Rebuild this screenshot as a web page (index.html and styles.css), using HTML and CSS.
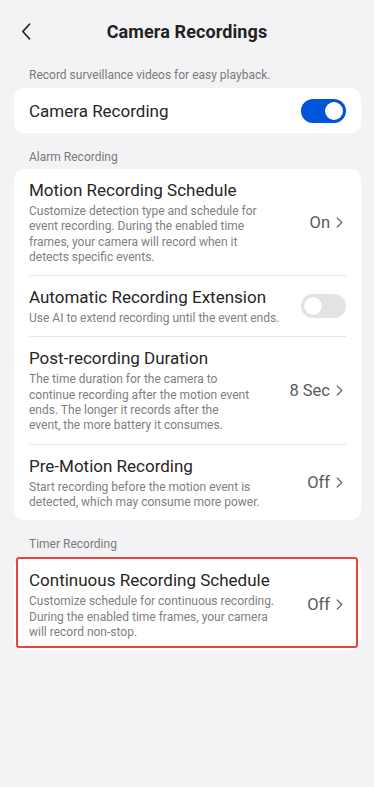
FILE: index.html
```html
<!DOCTYPE html>
<html lang="en">
<head>
<meta charset="utf-8">
<meta name="viewport" content="width=device-width, initial-scale=1">
<title>Camera Recordings</title>
<link rel="stylesheet" href="styles.css">
</head>
<body>
<header class="topbar">
  <button class="back" aria-label="Back">
    <svg width="10" height="17" viewBox="0 0 10 17"><path d="M8.5 1.2 L1.8 8.5 L8.5 15.8" fill="none" stroke="#222" stroke-width="1.7" stroke-linecap="round" stroke-linejoin="round"/></svg>
  </button>
  <h1 class="title">Camera Recordings</h1>
  <span class="spacer"></span>
</header>

<p class="section-label first">Record surveillance videos for easy playback.</p>
<section class="card">
  <div class="row single">
    <span class="row-title">Camera Recording</span>
    <span class="switch on"><span class="knob"></span></span>
  </div>
</section>

<p class="section-label">Alarm Recording</p>
<section class="card">
  <div class="row">
    <div class="text">
      <div class="row-title">Motion Recording Schedule</div>
      <div class="row-desc">Customize detection type and schedule for<br>event recording. During the enabled time<br>frames, your camera will record when it<br>detects specific events.</div>
    </div>
    <span class="value">On<svg class="chev" width="7" height="11" viewBox="0 0 7 11"><path d="M1.2 1 L5.8 5.5 L1.2 10" fill="none" stroke="#666" stroke-width="1.2" stroke-linecap="round" stroke-linejoin="round"/></svg></span>
  </div>
  <div class="row">
    <div class="text">
      <div class="row-title">Automatic Recording Extension</div>
      <div class="row-desc">Use AI to extend recording until the event ends.</div>
    </div>
    <span class="switch"><span class="knob"></span></span>
  </div>
  <div class="row">
    <div class="text">
      <div class="row-title">Post-recording Duration</div>
      <div class="row-desc">The time duration for the camera to<br>continue recording after the motion event<br>ends. The longer it records after the<br>event, the more battery it consumes.</div>
    </div>
    <span class="value">8 Sec<svg class="chev" width="7" height="11" viewBox="0 0 7 11"><path d="M1.2 1 L5.8 5.5 L1.2 10" fill="none" stroke="#666" stroke-width="1.2" stroke-linecap="round" stroke-linejoin="round"/></svg></span>
  </div>
  <div class="row">
    <div class="text">
      <div class="row-title">Pre-Motion Recording</div>
      <div class="row-desc">Start recording before the motion event is<br>detected, which may consume more power.</div>
    </div>
    <span class="value">Off<svg class="chev" width="7" height="11" viewBox="0 0 7 11"><path d="M1.2 1 L5.8 5.5 L1.2 10" fill="none" stroke="#666" stroke-width="1.2" stroke-linecap="round" stroke-linejoin="round"/></svg></span>
  </div>
</section>

<p class="section-label spaced">Timer Recording</p>
<section class="card highlighted">
  <div class="row">
    <div class="text">
      <div class="row-title">Continuous Recording Schedule</div>
      <div class="row-desc">Customize schedule for continuous recording.<br>During the enabled time frames, your camera<br>will record non-stop.</div>
    </div>
    <span class="value">Off<svg class="chev" width="7" height="11" viewBox="0 0 7 11"><path d="M1.2 1 L5.8 5.5 L1.2 10" fill="none" stroke="#666" stroke-width="1.2" stroke-linecap="round" stroke-linejoin="round"/></svg></span>
  </div>
  <span class="focus-ring"></span>
</section>
</body>
</html>
```

FILE: styles.css
```css
* { box-sizing: border-box; }

html, body {
  margin: 0;
  padding: 0;
  background: #f3f3f6;
  font-family: Roboto, "Noto Sans", "Liberation Sans", sans-serif;
  color: #222;
  width: 374px;
  min-height: 787px;
}

.topbar {
  display: grid;
  grid-template-columns: 40px 1fr 40px;
  align-items: center;
  height: 62px;
  padding: 0 0 0 15px;
}

.back {
  border: 0;
  background: none;
  padding: 0;
  margin: 0 0 0 6px;
  width: 12px;
  height: 17px;
  display: flex;
  align-items: center;
}

.title {
  margin: 0;
  text-align: center;
  font-size: 18px;
  font-weight: 700;
  color: #222;
  letter-spacing: 0.1px;
  padding-right: 15px;
}

.section-label {
  margin: 16px 0 4px;
  padding: 0 29px;
  font-size: 12px;
  line-height: 16px;
  color: #7a7a7a;
}
.section-label.first { margin-top: 5px; margin-bottom: 5px; }
.section-label.spaced { margin-bottom: 7px; }

.card {
  margin: 0 13px 0 14px;
  background: #fff;
  border-radius: 10px;
  padding: 0 15px;
}

.card.highlighted {
  position: relative;
}

.focus-ring {
  position: absolute;
  left: 2px;
  top: -2px;
  right: 3px;
  bottom: 2px;
  border: 2.5px solid #e9443b;
  border-radius: 3px;
  pointer-events: none;
}

.row {
  display: flex;
  align-items: center;
  justify-content: space-between;
  gap: 12px;
  padding: 10px 0;
  border-bottom: 1px solid #e6e6e9;
}
.row:last-child, .row:nth-last-child(2):has(+ .focus-ring) { border-bottom: 0; }

.row.single {
  height: 45px;
  padding: 0;
}

.text { flex: 1; min-width: 0; }

.row-title {
  font-size: 17px;
  line-height: 22px;
  color: #262626;
}

.row-desc {
  margin-top: 3px;
  font-size: 12px;
  line-height: 15.3px;
  color: #808080;
}

.value {
  display: flex;
  align-items: center;
  gap: 6px;
  margin: 0 3px 0 12px;
  font-size: 16.5px;
  color: #5a5a5a;
  white-space: nowrap;
}
.chev { display: block; }

.switch {
  flex: none;
  position: relative;
  width: 45px;
  height: 24px;
  border-radius: 12px;
  background: #e3e3e6;
}
.switch .knob {
  position: absolute;
  top: 3px;
  left: 3px;
  width: 18px;
  height: 18px;
  border-radius: 50%;
  background: #fff;
  box-shadow: 0 0 1px rgba(0,0,0,0.15);
}
.switch.on { background: #0055da; }
.switch.on .knob { left: 24px; }
```
